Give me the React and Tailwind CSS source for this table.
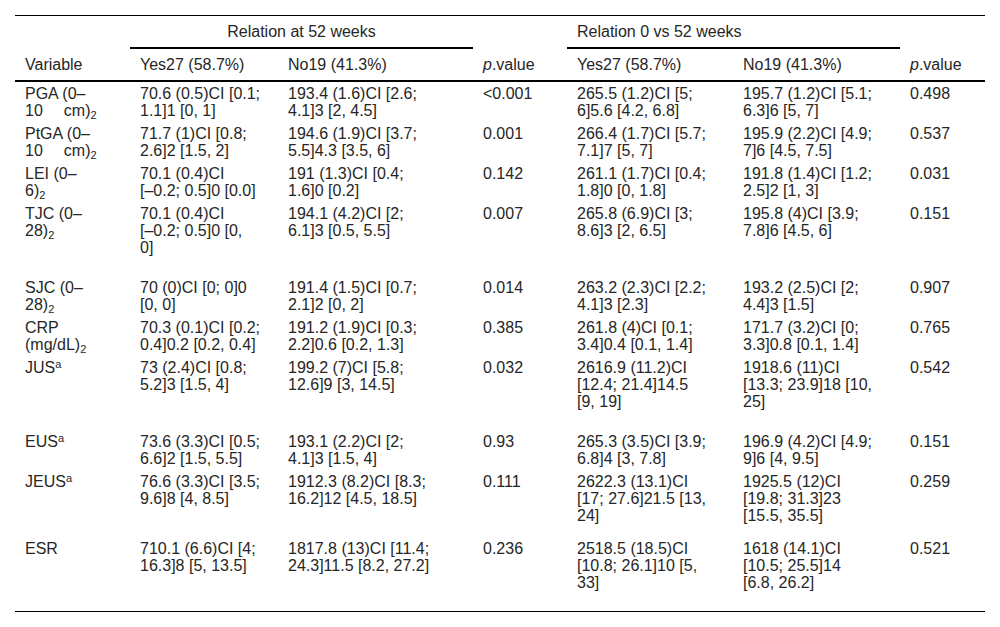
import React from 'react';

const Sub = ({ children }) => <sub className="text-[11px]">{children}</sub>;
const Sup = ({ children }) => <sup className="text-[11px]">{children}</sup>;
const Gap = () => <span className="inline-block w-[21px]" />;

const rows = [
  {
    v: ['PGA (0–', <>10<Gap />cm)<Sub>2</Sub></>],
    c: [
      ['70.6 (0.5)CI [0.1;', '1.1]1 [0, 1]'],
      ['193.4 (1.6)CI [2.6;', '4.1]3 [2, 4.5]'],
      ['<0.001'],
      ['265.5 (1.2)CI [5;', '6]5.6 [4.2, 6.8]'],
      ['195.7 (1.2)CI [5.1;', '6.3]6 [5, 7]'],
      ['0.498'],
    ],
  },
  {
    v: ['PtGA (0–', <>10<Gap />cm)<Sub>2</Sub></>],
    c: [
      ['71.7 (1)CI [0.8;', '2.6]2 [1.5, 2]'],
      ['194.6 (1.9)CI [3.7;', '5.5]4.3 [3.5, 6]'],
      ['0.001'],
      ['266.4 (1.7)CI [5.7;', '7.1]7 [5, 7]'],
      ['195.9 (2.2)CI [4.9;', '7]6 [4.5, 7.5]'],
      ['0.537'],
    ],
  },
  {
    v: ['LEI (0–', <>6)<Sub>2</Sub></>],
    c: [
      ['70.1 (0.4)CI', '[–0.2; 0.5]0 [0.0]'],
      ['191 (1.3)CI [0.4;', '1.6]0 [0.2]'],
      ['0.142'],
      ['261.1 (1.7)CI [0.4;', '1.8]0 [0, 1.8]'],
      ['191.8 (1.4)CI [1.2;', '2.5]2 [1, 3]'],
      ['0.031'],
    ],
  },
  {
    pb: 'pb-[20px]',
    v: ['TJC (0–', <>28)<Sub>2</Sub></>],
    c: [
      ['70.1 (0.4)CI', '[–0.2; 0.5]0 [0,', '0]'],
      ['194.1 (4.2)CI [2;', '6.1]3 [0.5, 5.5]'],
      ['0.007'],
      ['265.8 (6.9)CI [3;', '8.6]3 [2, 6.5]'],
      ['195.8 (4)CI [3.9;', '7.8]6 [4.5, 6]'],
      ['0.151'],
    ],
  },
  {
    v: ['SJC (0–', <>28)<Sub>2</Sub></>],
    c: [
      ['70 (0)CI [0; 0]0', '[0, 0]'],
      ['191.4 (1.5)CI [0.7;', '2.1]2 [0, 2]'],
      ['0.014'],
      ['263.2 (2.3)CI [2.2;', '4.1]3 [2.3]'],
      ['193.2 (2.5)CI [2;', '4.4]3 [1.5]'],
      ['0.907'],
    ],
  },
  {
    v: ['CRP', <>(mg/dL)<Sub>2</Sub></>],
    c: [
      ['70.3 (0.1)CI [0.2;', '0.4]0.2 [0.2, 0.4]'],
      ['191.2 (1.9)CI [0.3;', '2.2]0.6 [0.2, 1.3]'],
      ['0.385'],
      ['261.8 (4)CI [0.1;', '3.4]0.4 [0.1, 1.4]'],
      ['171.7 (3.2)CI [0;', '3.3]0.8 [0.1, 1.4]'],
      ['0.765'],
    ],
  },
  {
    pb: 'pb-[20px]',
    v: [<>JUS<Sup>a</Sup></>],
    c: [
      ['73 (2.4)CI [0.8;', '5.2]3 [1.5, 4]'],
      ['199.2 (7)CI [5.8;', '12.6]9 [3, 14.5]'],
      ['0.032'],
      ['2616.9 (11.2)CI', '[12.4; 21.4]14.5', '[9, 19]'],
      ['1918.6 (11)CI', '[13.3; 23.9]18 [10,', '25]'],
      ['0.542'],
    ],
  },
  {
    v: [<>EUS<Sup>a</Sup></>],
    c: [
      ['73.6 (3.3)CI [0.5;', '6.6]2 [1.5, 5.5]'],
      ['193.1 (2.2)CI [2;', '4.1]3 [1.5, 4]'],
      ['0.93'],
      ['265.3 (3.5)CI [3.9;', '6.8]4 [3, 7.8]'],
      ['196.9 (4.2)CI [4.9;', '9]6 [4, 9.5]'],
      ['0.151'],
    ],
  },
  {
    pb: 'pb-[13px]',
    v: [<>JEUS<Sup>a</Sup></>],
    c: [
      ['76.6 (3.3)CI [3.5;', '9.6]8 [4, 8.5]'],
      ['1912.3 (8.2)CI [8.3;', '16.2]12 [4.5, 18.5]'],
      ['0.111'],
      ['2622.3 (13.1)CI', '[17; 27.6]21.5 [13,', '24]'],
      ['1925.5 (12)CI', '[19.8; 31.3]23', '[15.5, 35.5]'],
      ['0.259'],
    ],
  },
  {
    pb: 'pb-[20px]',
    v: ['ESR'],
    c: [
      ['710.1 (6.6)CI [4;', '16.3]8 [5, 13.5]'],
      ['1817.8 (13)CI [11.4;', '24.3]11.5 [8.2, 27.2]'],
      ['0.236'],
      ['2518.5 (18.5)CI', '[10.8; 26.1]10 [5,', '33]'],
      ['1618 (14.1)CI', '[10.5; 25.5]14', '[6.8, 26.2]'],
      ['0.521'],
    ],
  },
];

const Lines = ({ items }) =>
  items.map((t, i) => (
    <div key={i} className="whitespace-nowrap">
      {t}
    </div>
  ));

export default function App() {
  return (
    <div className="w-[1000px] h-[627px] bg-white pt-[15px] px-[15px] font-['Liberation_Sans',Arial,sans-serif] text-[16px] leading-[17px] text-[#262626]">
      <table className="w-[970px] border-collapse table-fixed">
        <colgroup>
          <col className="w-[115px]" />
          <col className="w-[148px]" />
          <col className="w-[195px]" />
          <col className="w-[94px]" />
          <col className="w-[166px]" />
          <col className="w-[167px]" />
          <col className="w-[85px]" />
        </colgroup>
        <thead>
          <tr className="border-t border-black">
            <th className="font-normal py-[7px]" />
            <th colSpan={2} className="font-normal text-center py-[7px] border-b-2 border-black">
              Relation at 52 weeks
            </th>
            <th className="font-normal py-[7px]" />
            <th colSpan={2} className="font-normal text-left pl-[10px] py-[7px] border-b-2 border-black">
              Relation 0 vs 52 weeks
            </th>
            <th className="font-normal py-[7px]" />
          </tr>
          <tr className="border-b-2 border-black">
            <th className="font-normal text-left pl-[10px] pt-[7px] pb-[7px]">Variable</th>
            <th className="font-normal text-left pl-[10px] pt-[7px] pb-[7px]">Yes27 (58.7%)</th>
            <th className="font-normal text-left pl-[10px] pt-[7px] pb-[7px]">No19 (41.3%)</th>
            <th className="font-normal text-left pl-[10px] pt-[7px] pb-[7px]">
              <i>p</i>.value
            </th>
            <th className="font-normal text-left pl-[10px] pt-[7px] pb-[7px]">Yes27 (58.7%)</th>
            <th className="font-normal text-left pl-[10px] pt-[7px] pb-[7px]">No19 (41.3%)</th>
            <th className="font-normal text-left pl-[10px] pt-[7px] pb-[7px]">
              <i>p</i>.value
            </th>
          </tr>
        </thead>
        <tbody className="border-b border-black">
          {rows.map((r, i) => (
            <tr key={i} className="align-top">
              <td className={`pl-[10px] pt-[3px] ${r.pb || 'pb-[3px]'}`}>
                <Lines items={r.v} />
              </td>
              {r.c.map((cell, j) => (
                <td key={j} className={`pl-[10px] pt-[3px] ${r.pb || 'pb-[3px]'}`}>
                  <Lines items={cell} />
                </td>
              ))}
            </tr>
          ))}
        </tbody>
      </table>
    </div>
  );
}
